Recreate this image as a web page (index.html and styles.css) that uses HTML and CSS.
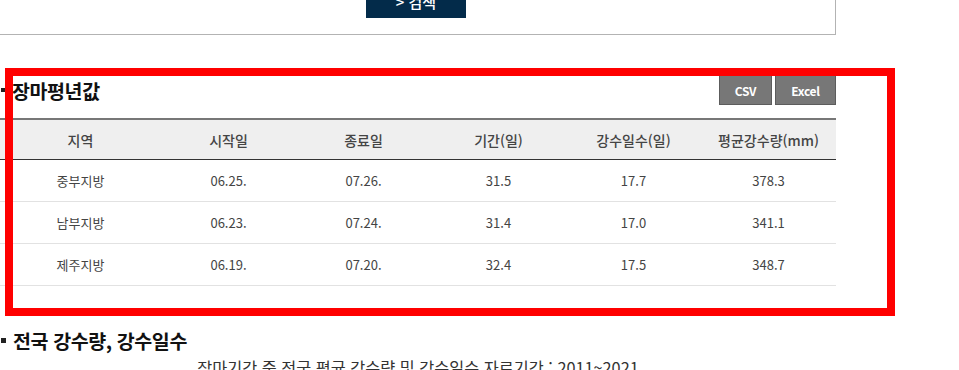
FILE: index.html
```html
<!DOCTYPE html>
<html lang="ko">
<head>
<meta charset="utf-8">
<link rel="stylesheet" href="styles.css">
</head>
<body>
<div class="page">
  <div class="search-box">
    <button class="search-btn">&gt; 검색</button>
  </div>

  <section class="section first">
    <div class="sec-head">
      <h3 class="sec-title">장마평년값</h3>
      <div class="btns">
        <button class="dl-btn csv">CSV</button>
        <button class="dl-btn excel">Excel</button>
      </div>
    </div>
    <table class="data">
      <colgroup>
        <col class="c1"><col class="cn"><col class="cn"><col class="cn"><col class="cn"><col class="cn">
      </colgroup>
      <thead>
        <tr><th>지역</th><th>시작일</th><th>종료일</th><th>기간(일)</th><th>강수일수(일)</th><th>평균강수량(mm)</th></tr>
      </thead>
      <tbody>
        <tr><td>중부지방</td><td>06.25.</td><td>07.26.</td><td>31.5</td><td>17.7</td><td>378.3</td></tr>
        <tr><td>남부지방</td><td>06.23.</td><td>07.24.</td><td>31.4</td><td>17.0</td><td>341.1</td></tr>
        <tr><td>제주지방</td><td>06.19.</td><td>07.20.</td><td>32.4</td><td>17.5</td><td>348.7</td></tr>
      </tbody>
    </table>
  </section>

  <section class="section second">
    <h3 class="sec-title">전국 강수량, 강수일수</h3>
    <p class="caption">장마기간 중 전국 평균 강수량 및 강수일수 자료기간 : 2011~2021</p>
  </section>
</div>
<div class="highlight"></div>
</body>
</html>
```

FILE: styles.css
```css
html, body {
  margin: 0;
  padding: 0;
  background: #fff;
}
body {
  font-family: "Noto Sans CJK KR", "Noto Sans", sans-serif;
  color: #333;
  position: relative;
  height: 370px;
  overflow: hidden;
}
.page {
  width: 836px;
}
.search-box {
  margin: -40px 0 0 -20px;
  border: 1px solid #b3b3b3;
  border-top: none;
  padding: 26px 0 16px 20px;
  display: flex;
  justify-content: center;
}
.search-btn {
  width: 100px;
  height: 32px;
  border: none;
  background: #032b4a;
  color: #fff;
  font-family: inherit;
  font-size: 15px;
  font-weight: 500;
  line-height: 32px;
  padding: 0;
  transform: translateX(-2px);
}
.section.first {
  margin-top: 40px;
}
.sec-head {
  display: flex;
  justify-content: space-between;
  align-items: center;
  height: 30px;
  margin-bottom: 13px;
}
.sec-title {
  margin: 0;
  font-size: 19.5px;
  font-weight: 700;
  color: #111;
  display: flex;
  align-items: center;
  gap: 7px;
  letter-spacing: -0.4px;
}
.sec-title::before {
  content: "";
  width: 4px;
  height: 4px;
  background: #222;
  margin-left: 1px;
}
.second .sec-title::before {
  width: 5px;
  height: 5px;
}
.btns {
  display: flex;
  gap: 3px;
}
.dl-btn {
  height: 30px;
  background: #777;
  border: 1px solid #5c5c5c;
  color: #fff;
  font-family: inherit;
  font-size: 12px;
  font-weight: 700;
  padding: 0;
  letter-spacing: -0.3px;
}
.dl-btn.csv { width: 53px; }
.dl-btn.excel { width: 61px; }

table.data {
  width: 836px;
  border-collapse: collapse;
  table-layout: fixed;
  border-top: 2px solid #777;
}
col.c1 { width: 161px; }
col.cn { width: 135px; }
.data th {
  height: 39px;
  padding: 0;
  background: #efefef;
  border-bottom: 1px solid #333;
  font-size: 14px;
  font-weight: 500;
  color: #444;
  text-align: center;
}
.data td {
  height: 41px;
  padding: 0;
  border-bottom: 1px solid #e2e2e2;
  font-size: 13px;
  color: #444;
  text-align: center;
}
.section.second {
  margin-top: 40px;
}
.caption {
  margin: 0;
  text-align: center;
  font-size: 16.3px;
  color: #333;
}
.highlight {
  position: absolute;
  left: 5px;
  top: 68px;
  width: 890px;
  height: 248px;
  border: 8px solid #ff0000;
  box-sizing: border-box;
  pointer-events: none;
}
```
